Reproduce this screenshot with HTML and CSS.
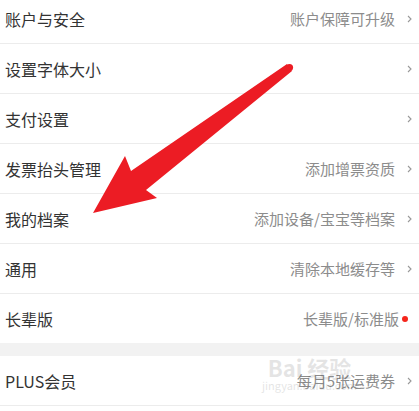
FILE: index.html
```html
<!DOCTYPE html>
<html lang="zh-CN">
<head>
    <meta charset="UTF-8">
    <meta name="viewport" content="width=device-width, initial-scale=1.0">
    <title>设置</title>
    <link rel="stylesheet" href="styles.css">
</head>
<body>

    <div class="page">
        <!-- Settings group -->
        <div class="group first">
            <div class="row">
                <span class="label">账户与安全</span>
                <span class="value">账户保障可升级</span>
                <svg class="chevron" viewBox="0 0 5 8"><polyline points="1,1 4,4 1,7"/></svg>
            </div>
            <div class="row">
                <span class="label">设置字体大小</span>
                <span class="value"></span>
                <svg class="chevron" viewBox="0 0 5 8"><polyline points="1,1 4,4 1,7"/></svg>
            </div>
            <div class="row">
                <span class="label">支付设置</span>
                <span class="value"></span>
                <svg class="chevron" viewBox="0 0 5 8"><polyline points="1,1 4,4 1,7"/></svg>
            </div>
            <div class="row">
                <span class="label">发票抬头管理</span>
                <span class="value">添加增票资质</span>
                <svg class="chevron" viewBox="0 0 5 8"><polyline points="1,1 4,4 1,7"/></svg>
            </div>
            <div class="row">
                <span class="label">我的档案</span>
                <span class="value">添加设备/宝宝等档案</span>
                <svg class="chevron" viewBox="0 0 5 8"><polyline points="1,1 4,4 1,7"/></svg>
            </div>
            <div class="row">
                <span class="label">通用</span>
                <span class="value">清除本地缓存等</span>
                <svg class="chevron" viewBox="0 0 5 8"><polyline points="1,1 4,4 1,7"/></svg>
            </div>
            <div class="row last">
                <span class="label">长辈版</span>
                <span class="value">长辈版/标准版</span>
                <span class="dot"></span>
            </div>
        </div>

        <div class="gap"></div>

        <div class="group">
            <div class="row">
                <span class="label">PLUS会员</span>
                <span class="value">每月5张运费券</span>
                <svg class="chevron" viewBox="0 0 5 8"><polyline points="1,1 4,4 1,7"/></svg>
            </div>
            <div class="row last"></div>
        </div>

        <!-- annotation arrow drawn over the screenshot -->
        <svg class="arrow" viewBox="0 0 419 411">
            <polygon points="287,64 131,171 125,156 93,213 157,198 146,190 292,71"/>
            <circle cx="289.5" cy="67.5" r="3.6"/>
        </svg>

        <div class="watermark">
            <div class="wm-big">Bai 经验</div>
            <div class="wm-small">jingyan.baidu.com</div>
        </div>
    </div>

</body>
</html>
```

FILE: styles.css
```css
body {
    margin: 0;
    font-family: "Noto Sans CJK SC", "Noto Sans", sans-serif;
    background: #f2f2f2;
    overflow: hidden;
}
.page {
    position: relative;
    width: 419px;
    height: 411px;
    overflow: hidden;
}
.group {
    background: white;
}
.group.first {
    margin-top: -6px;
}
.row {
    display: flex;
    align-items: center;
    height: 49px;
    padding: 0 7px 0 5px;
    border-bottom: 1px solid #ececec;
}
.row.last {
    border-bottom: none;
}
.label {
    flex: 1;
    font-size: 16px;
    color: #333;
}
.value {
    font-size: 15px;
    color: #8c8c8c;
    margin-right: 12px;
}
.chevron {
    width: 5px;
    height: 8px;
    fill: none;
    stroke: #999;
    stroke-width: 1.1;
}
.dot {
    width: 6px;
    height: 6px;
    border-radius: 50%;
    background: #f5251b;
    margin-left: -9px;
    margin-right: 4px;
}
.gap {
    height: 13px;
}
.arrow {
    position: absolute;
    left: 0;
    top: 0;
    width: 419px;
    height: 411px;
    fill: #ec1c24;
}
.watermark {
    position: absolute;
    left: 262px;
    top: 355px;
    color: #000;
    opacity: 0.1;
    text-align: center;
}
.wm-big {
    font-size: 22px;
    font-weight: bold;
    line-height: 24px;
}
.wm-small {
    font-size: 11px;
    line-height: 12px;
}
```
